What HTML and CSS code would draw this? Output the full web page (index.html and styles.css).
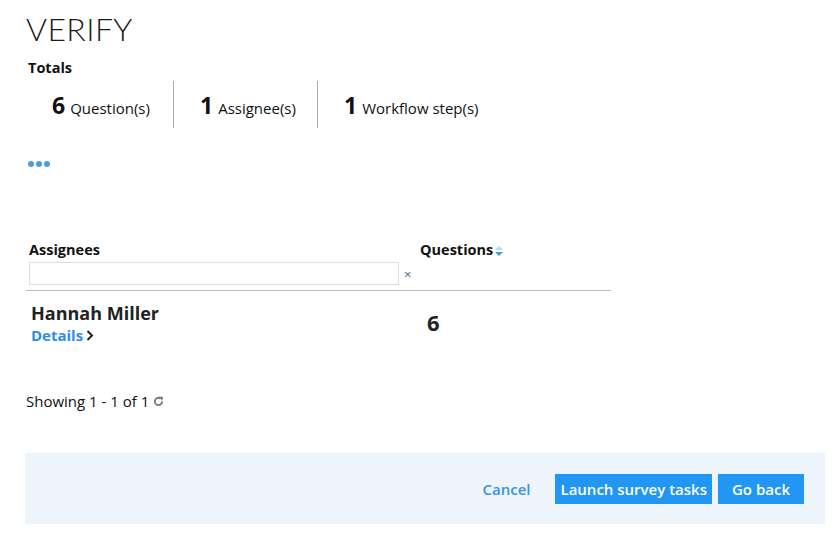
FILE: index.html
```html
<!DOCTYPE html>
<html>
<head>
<meta charset="utf-8">
<link rel="stylesheet" href="styles.css">
</head>
<body>
<div class="page">
  <h1 class="title">VERIFY</h1>
  <div class="totals-label">Totals</div>
  <div class="stats">
    <div class="stat"><span class="num">6</span><span class="lbl">Question(s)</span></div>
    <div class="stat"><span class="num">1</span><span class="lbl">Assignee(s)</span></div>
    <div class="stat"><span class="num">1</span><span class="lbl">Workflow step(s)</span></div>
  </div>
  <div class="dots"><span></span><span></span><span></span></div>

  <div class="table">
    <div class="thead">
      <div class="col-a">
        <div class="th">Assignees</div>
        <div class="filter"><input class="search" type="text"><span class="clear">×</span></div>
      </div>
      <div class="col-b">
        <div class="th">Questions<svg class="sort" width="8" height="10" viewBox="0 0 8 10"><path d="M0 4 L4 0 L8 4 Z" fill="#b9d9f5"/><path d="M0 6 L8 6 L4 10 Z" fill="#3f9be6"/></svg></div>
      </div>
    </div>
    <div class="row">
      <div class="col-a">
        <div class="name">Hannah Miller</div>
        <a class="details">Details<svg class="chev" width="8" height="11" viewBox="0 0 8 11"><path d="M1.5 1 L6 5.5 L1.5 10" fill="none" stroke="#222" stroke-width="2"/></svg></a>
      </div>
      <div class="col-b"><span class="count">6</span></div>
    </div>
  </div>

  <div class="showing">Showing 1 - 1 of 1 <svg class="refresh" width="11" height="11" viewBox="0 0 12 12"><path d="M10 6 A4 4 0 1 1 8.3 2.7" fill="none" stroke="#777" stroke-width="2"/><path d="M6.5 0.5 L11 1 L10 5.2 Z" fill="#777"/></svg></div>

  <div class="footer">
    <a class="cancel">Cancel</a>
    <button class="btn">Launch survey tasks</button>
    <button class="btn">Go back</button>
  </div>
</div>
</body>
</html>
```

FILE: styles.css
```css
* { box-sizing: border-box; }
html, body { margin: 0; padding: 0; background: #fff; }
body { font-family: "Open Sans", "Liberation Sans", sans-serif; color: #111; }
.page { padding: 10px 10px 0 26px; }
.title {
  margin: 0;
  font-family: "Lato", "Open Sans", sans-serif;
  font-weight: 300;
  font-size: 32px;
  letter-spacing: 0.4px;
  line-height: 38px;
  color: #1a1a1a;
}
.totals-label { font-weight: 700; font-size: 14.5px; margin: 11px 0 0 2px; line-height: 18px; }
.stats { display: flex; margin-top: 4px; height: 47px; }
.stat {
  display: flex; align-items: center; padding: 0 22px 0 26px;
  border-right: 1px solid #aaa;
}
.stat:first-child { width: 148px; padding-left: 26px; }
.stat:nth-child(2) { width: 144px; }
.stat:last-child { border-right: none; }
.num { font-weight: 700; font-size: 23px; margin-right: 5px; line-height: 1; margin-top: 2px; }
.lbl { font-size: 15px; margin-top: 6px; }
.dots { display: flex; gap: 2px; margin: 33px 0 0 2px; height: 6px; }
.dots span { width: 6px; height: 6px; border-radius: 50%; background: #4a9de0; }

.table { width: 585px; margin-top: 73px; }
.thead { display: flex; border-bottom: 1px solid #bbb; padding-bottom: 5px; }
.col-a { width: 394px; padding-left: 3px; }
.col-b { flex: 1; }
.th { font-weight: 700; font-size: 14.5px; line-height: 20px; display: flex; align-items: center; }
.sort { margin-left: 2px; margin-top: 1px; }
.filter { display: flex; align-items: center; margin-top: 2px; }
.search { width: 370px; height: 23px; border: 1px solid #ddd; margin: 0; padding: 0; }
.clear { color: #4a6680; font-size: 13px; margin-left: 5px; }
.row { display: flex; padding-top: 11px; }
.row .col-a { padding-left: 5px; }
.name { font-weight: 700; font-size: 18px; line-height: 22px; color: #222; }
.details { font-weight: 700; font-size: 15px; color: #2b8de8; display: inline-flex; align-items: center; line-height: 22px; }
.chev { margin-left: 3px; }
.row .col-b { display: flex; align-items: center; padding-left: 7px; }
.count { font-weight: 700; font-size: 22px; color: #222; margin-top: -4px; }

.showing { font-size: 15px; margin-top: 45px; display: flex; align-items: center; gap: 4px; }
.refresh { margin-top: 1px; }

.footer {
  margin: 42px 0 0 -1px; width: 800px; height: 71px; background: #eef4fc;
  display: flex; justify-content: flex-end; align-items: center; padding-right: 21px; gap: 6px;
}
.cancel { color: #3a91e6; font-weight: 600; font-size: 15px; margin-right: 19px; }
.btn {
  background: #2196f3; color: #fff; border: none; font-family: inherit;
  font-weight: 600; font-size: 15px; height: 30px; padding: 0 5px; margin: 0;
}
.btn:last-child { padding: 0 14px; }
```
